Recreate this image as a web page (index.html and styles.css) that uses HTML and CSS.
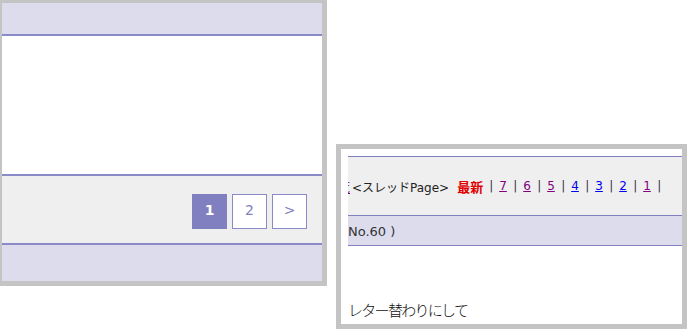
FILE: index.html
```html
<!DOCTYPE html>
<html>
<head>
  <meta charset="utf-8">
  <link rel="stylesheet" href="styles.css">
</head>
<body>
<div class="stage">

  <div class="panel panelLeft">
    <div class="band bandHead"></div>
    <div class="blank"></div>
    <div class="pager">
      <span class="pg pgOn">1</span>
      <a class="pg" href="#">2</a>
      <a class="pg" href="#">&gt;</a>
    </div>
    <div class="band bandFoot"></div>
  </div>

  <div class="panel panelRight">
    <div class="view">
      <div class="sheet">
        <div class="navrow">
          <div class="navin">
            <a class="visited cut" href="#">覧</a>
            <span class="lbl">&lt;スレッドPage&gt;</span>
            <span class="newest">最新</span>
            <span class="sep">|</span><a class="num visited" href="#">7</a>
            <span class="sep">|</span><a class="num visited" href="#">6</a>
            <span class="sep">|</span><a class="num visited" href="#">5</a>
            <span class="sep">|</span><a class="num" href="#">4</a>
            <span class="sep">|</span><a class="num" href="#">3</a>
            <span class="sep">|</span><a class="num" href="#">2</a>
            <span class="sep">|</span><a class="num visited" href="#">1</a>
            <span class="sep">|</span>
          </div>
        </div>
        <div class="titlerow">No.60 )</div>
        <div class="bodyrow">
          <p class="msg">レター替わりにして</p>
        </div>
      </div>
    </div>
  </div>

</div>
</body>
</html>
```

FILE: styles.css
```css
body {
    margin: 0;
    background: #ffffff;
    font-family: "DejaVu Sans", "Noto Sans CJK JP", sans-serif;
    overflow: hidden;
}
.stage {
    display: flex;
    align-items: flex-start;
}
.panel {
    border: 5px solid #c4c4c4;
    background: #ffffff;
    flex: none;
}

/* left window */
.panelLeft {
    width: 320px;
    height: 278px;
    margin: -2px 0 0 -3px;
    display: flex;
    flex-direction: column;
}
.band { background-color: #dddcec; }
.bandHead {
    height: 31px;
    border-bottom: 2px solid #8a8ac8;
}
.blank {
    height: 138px;
    border-bottom: 2px solid #8a8ac8;
}
.pager {
    height: 69px;
    background: #efefef;
    border-bottom: 2px solid #8a8ac8;
    display: flex;
    justify-content: flex-end;
    align-items: flex-start;
    gap: 5px;
    padding: 18px 15px 0 0;
    box-sizing: border-box;
}
.bandFoot { flex: 1; }
.pg {
    width: 35px;
    height: 35px;
    box-sizing: border-box;
    border: 1px solid #8a8ac8;
    background: #ffffff;
    color: #8080c0;
    font-size: 14px;
    line-height: 31px;
    text-align: center;
    text-decoration: none;
}
.pgOn {
    background: #8080c0;
    border-color: #8080c0;
    color: #ffffff;
    font-weight: bold;
}

/* right window */
.panelRight {
    width: 341px;
    height: 175px;
    margin: 144px 0 0 9px;
}
.view {
    height: 175px;
    padding: 7px 0 0 7px;
    box-sizing: border-box;
}
.sheet {
    width: 334px;
    height: 168px;
    overflow: hidden;
}
.navrow {
    height: 58px;
    background: #efefef;
    border-top: 1px solid #8080c0;
    border-bottom: 1px solid #8080c0;
    display: flex;
    align-items: center;
}
.navin {
    display: flex;
    align-items: center;
    font-size: 12px;
    color: #222222;
    white-space: nowrap;
    margin-left: -10px;
}
.cut { width: 12px; }
.lbl { margin-left: 2px; }
.newest {
    color: #e00000;
    font-weight: bold;
    font-size: 13px;
    margin: 0 6px 0 8px;
}
.sep {
    display: inline-block;
    width: 10px;
    color: #333344;
}
.num {
    display: inline-block;
    width: 14px;
    color: #0000ee;
}
.visited { color: #800080; }
.titlerow {
    height: 29px;
    background: #dddcec;
    border-bottom: 1px solid #8080c0;
    font-size: 13px;
    color: #333333;
    line-height: 31px;
}
.bodyrow { height: 78px; }
.msg {
    margin: 0;
    padding-top: 54px;
    font-family: "Noto Sans CJK JP", sans-serif;
    font-size: 15px;
    letter-spacing: -1.7px;
    line-height: 20px;
    color: #111111;
    font-weight: 300;
}
```
